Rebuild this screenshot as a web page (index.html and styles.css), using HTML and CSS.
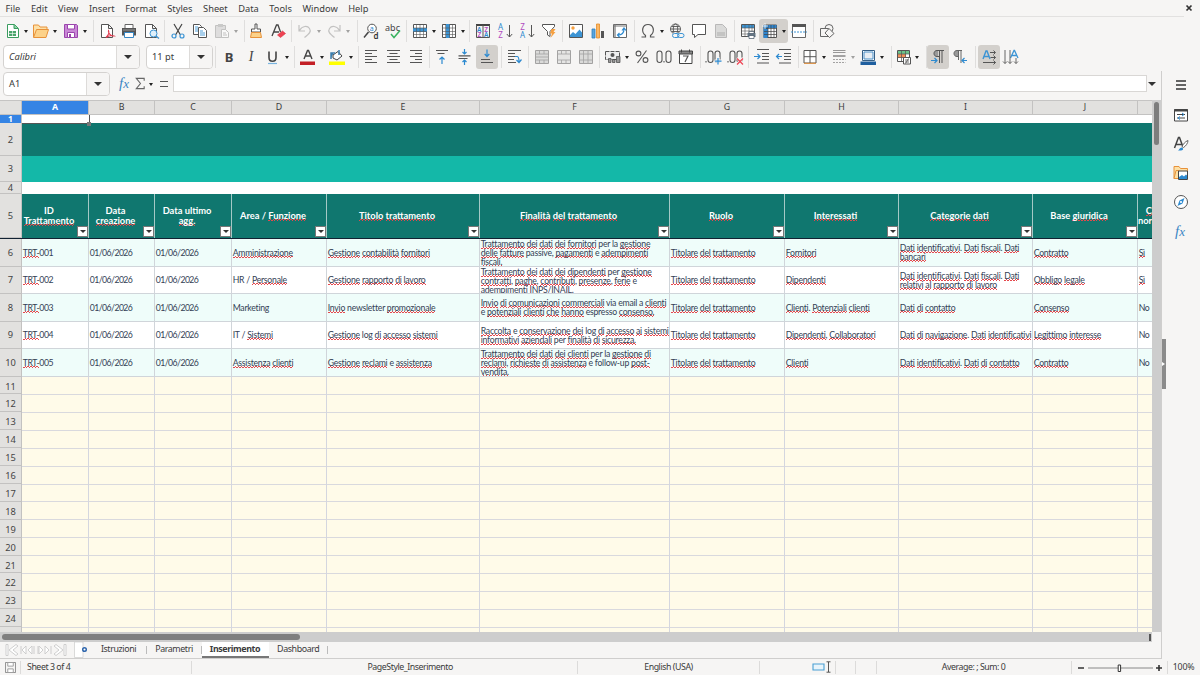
FILE: index.html
```html
<!DOCTYPE html>
<html lang="it">
<head>
<meta charset="utf-8">
<title>Registro trattamenti</title>
<link rel="stylesheet" href="styles.css">
</head>
<body>
<div class="app">
<nav class="menu"><span>File</span><span>Edit</span><span>View</span><span>Insert</span><span>Format</span><span>Styles</span><span>Sheet</span><span>Data</span><span>Tools</span><span>Window</span><span>Help</span>
<svg class="close" viewBox="0 0 8 8"><path d="M1.5 1.5l5 5M6.500 1.500l-5 5" stroke="#333" stroke-width="1.7"/></svg></nav>

<div class="bar bar1">
<div class="group first">
<svg viewBox="0 0 22 22"><path d="M6.500 4.500h7l4 4v9h-11z" fill="#fff" stroke="#3a9c5f"/><path d="M13 4.500v4h4" fill="#86d3a0" stroke="#3a9c5f"/><path d="M8 11h7v5H8z" fill="#4aa56b"/><path d="M8 13.500h7M11.500 11v5" stroke="#fff" stroke-width=".6"/></svg><i class="dd"></i>
<svg viewBox="0 0 22 22"><path d="M3.500 17V5h5l1.500 2h7v3" fill="#fde0a6" stroke="#e8923a"/><path d="M3.500 17.500l3-8h12l-2.500 8z" fill="#fcd28a" stroke="#e8923a"/></svg><i class="dd"></i>
<svg viewBox="0 0 22 22"><path d="M4.500 4.500h12l1 1v12h-13z" fill="#c987d6" stroke="#9b45ad"/><path d="M7.500 4.500h7v4.500h-7zM7.500 12.500h7v5h-7z" fill="#fff" stroke="#9b45ad"/><path d="M9 14h2v3H9z" fill="#9b45ad"/></svg><i class="dd"></i>
</div>
<div class="group">
<svg viewBox="0 0 22 22"><path d="M5.500 4.500h7l4 4v9h-11zM12.500 4.500v4h4" fill="#fff" stroke="#555"/><path d="M10 17.500c2-2 3.500-5 2.500-7-.8 2 2 6 5.500 5.500-2-.8-5-.4-8 1.500z" fill="none" stroke="#e03c50" stroke-width="1.100"/></svg>
<svg viewBox="0 0 22 22"><path d="M7 4.500h8v4H7z" fill="#fff" stroke="#666"/><path d="M4 8h14v7.500H4z" fill="#555"/><path d="M6.500 12.500h9v5h-9z" fill="#fff" stroke="#3686c4"/><path d="M5 10h12" stroke="#999"/></svg>
<svg viewBox="0 0 22 22"><path d="M5.500 4.500h7l4 4v9h-11zM12.500 4.500v4h4" fill="#fff" stroke="#555"/><circle cx="13.500" cy="13.500" r="3.500" fill="#dff0fb" stroke="#3c94d4"/><path d="M16 16l3 2.500" stroke="#3c94d4" stroke-width="1.400"/></svg>
</div>
<div class="group">
<svg viewBox="0 0 22 22"><path d="M7 4l6.500 11M15 4L8.500 15" stroke="#444" stroke-width="1.200"/><circle cx="7" cy="16" r="2" fill="none" stroke="#3c94d4" stroke-width="1.200"/><circle cx="15" cy="16" r="2" fill="none" stroke="#3c94d4" stroke-width="1.200"/></svg>
<svg viewBox="0 0 22 22"><path d="M4.500 4.500h6l2 2v8h-8z" fill="#fff" stroke="#555"/><path d="M9.500 7.500h5l3 3v7h-8z" fill="#fff" stroke="#555"/><path d="M11 11h3M11 13h5M11 15h5M6 7h3M6 9h3M6 11h3" stroke="#3c94d4" stroke-width=".9"/></svg>
<svg class="dim" viewBox="0 0 22 22"><path d="M4.500 5.500h10v12h-10z" fill="#bbb" stroke="#777"/><path d="M7 4h5v3H7z" fill="#888"/><path d="M10.500 9.500h4l3 3v5h-7z" fill="#fff" stroke="#777"/><path d="M12 13h3M12 15h4" stroke="#777"/></svg><i class="dd dim"></i>
</div>
<div class="group tight">
<svg viewBox="0 0 22 22"><path d="M10 4h2v5h3.500v3h-9V9H10z" fill="#fff" stroke="#555"/><path d="M6.500 12.500h9l1 5h-11z" fill="#fcd28a" stroke="#e8923a"/></svg>
<svg viewBox="0 0 22 22"><path d="M5 16L9.500 5h1.500l2.500 7M7 12h5" fill="none" stroke="#444" stroke-width="1.300"/><path d="M10.500 15l5-4 3 2.500-5 4z" fill="#ee4252" stroke="#d52f40" stroke-width=".6"/></svg>
</div>
<div class="group">
<svg class="dim" viewBox="0 0 22 22"><path d="M5 5v6h6M5.500 10.500c3-5 8-5 10-2s0 5-5 9" fill="none" stroke="#777" stroke-width="1.200"/></svg><i class="dd dim"></i>
<svg class="dim" viewBox="0 0 22 22"><path d="M17 5v6h-6M16.500 10.500c-3-5-8-5-10-2s0 5 5 9" fill="none" stroke="#777" stroke-width="1.200"/></svg><i class="dd dim"></i>
</div>
<div class="group">
<svg viewBox="0 0 22 22"><circle cx="12" cy="8.500" r="4.300" fill="#fff" stroke="#555"/><path d="M8.500 12L4 17.500" stroke="#444" stroke-width="1.500"/><text x="9.800" y="11.200" font-size="7" fill="#2d8ad0">a</text><text x="13.500" y="18.500" font-size="8" fill="#333" font-weight="600">d</text></svg>
<svg viewBox="0 0 22 22"><text x="3" y="10.500" font-size="9" textLength="15" fill="#444">abc</text><path d="M9 14l3 3.500 6-7" fill="none" stroke="#39b35f" stroke-width="1.500"/></svg>
</div>
<div class="group">
<svg viewBox="0 0 22 22"><path d="M4.500 4.500h13v13h-13z" fill="#fff" stroke="#555"/><path d="M4 8h14v4H4z" fill="#3c94d4"/><path d="M4 8h14M4 11.500h14M4 14.500h14M7.500 4v14M11 4v14M14.500 4v14" stroke="#555" stroke-width=".6"/></svg><i class="dd"></i>
<svg viewBox="0 0 22 22"><path d="M4.500 4.500h13v13h-13z" fill="#fff" stroke="#555"/><path d="M8 4h4v14H8z" fill="#3c94d4"/><path d="M4 8h14M4 11.500h14M4 14.500h14M7.500 4v14M11.500 4v14M14.500 4v14" stroke="#555" stroke-width=".6"/></svg><i class="dd"></i>
</div>
<div class="group">
<svg viewBox="0 0 22 22"><path d="M4 4h14v2H4z" fill="#444"/><path d="M4.500 5v12.500h13V5M11 5v12.500" fill="none" stroke="#555"/><g font-size="6.500" font-weight="600"><text x="5" y="11.500" fill="#2d8ad0">A</text><text x="5.400" y="17.200" fill="#b14bc0">Z</text><text x="12.200" y="11.500" fill="#b14bc0">Z</text><text x="12" y="17.200" fill="#2d8ad0">A</text></g></svg>
<svg viewBox="0 0 22 22"><text x="4" y="10" font-size="8" fill="#2d8ad0">A</text><text x="4.300" y="18" font-size="8" fill="#b14bc0">Z</text><path d="M15.500 5v12M12.800 14l2.700 3 2.700-3" fill="none" stroke="#555"/></svg>
<svg viewBox="0 0 22 22"><text x="4.300" y="10" font-size="8" fill="#b14bc0">Z</text><text x="4" y="18" font-size="8" fill="#2d8ad0">A</text><path d="M15.500 5v12M12.800 14l2.700 3 2.700-3" fill="none" stroke="#555"/></svg>
<svg viewBox="0 0 22 22"><path d="M4.500 4.500h12v2l-4.500 5v5l-2.500-1.500v-3.500l-5-5z" fill="#fff" stroke="#555"/><path d="M13.500 9h4l-2 3h2l-5 6 1.500-4.500h-2z" fill="#f6a040"/></svg>
</div>
<div class="group">
<svg viewBox="0 0 22 22"><path d="M4.500 4.500h13v13h-13z" fill="#fff" stroke="#555"/><circle cx="8" cy="8" r="1.700" fill="#f6a040"/><path d="M5 17v-2l3-3 2.500 2 4-4.500 2.500 3V17z" fill="#3c94d4"/></svg>
<svg viewBox="0 0 22 22"><path d="M5 9h3v9H5z" fill="#5aa5dc" stroke="#2f7fbf" stroke-width=".8"/><path d="M9.500 4h3v14h-3z" fill="#fbb766" stroke="#e58c26" stroke-width=".8"/><path d="M14 11h3v7h-3z" fill="#555"/></svg>
<svg viewBox="0 0 22 22"><path d="M4.500 4.500h13v13h-13z" fill="#fff" stroke="#666"/><path d="M4 6h14M6 4v14" stroke="#777" stroke-width="1.200"/><path d="M9 15c4 0 6-2 6-6M13 10.500l2-2.500 2 2.500M10.500 13l-2 2 2 2" fill="none" stroke="#2d8ad0" stroke-width="1.200"/></svg>
</div>
<div class="group">
<svg viewBox="0 0 22 22"><path d="M4.500 17h4v-1.500c-5-4-3-11 2.500-11s7.500 7 2.500 11V17h4" fill="none" stroke="#555" stroke-width="1.200"/></svg><i class="dd"></i>
<svg viewBox="0 0 22 22"><g fill="none" stroke="#555" stroke-width=".9"><circle cx="9.500" cy="9" r="5"/><ellipse cx="9.500" cy="9" rx="2.200" ry="5"/><path d="M4.500 9h10M5.500 6.500h8M5.500 11.500h8"/></g><path d="M7 13h12v5H7z" fill="#f6f5f4"/><rect x="6.500" y="13.500" width="6.500" height="4" rx="2" fill="none" stroke="#3c94d4"/><rect x="11.500" y="13.500" width="6.500" height="4" rx="2" fill="none" stroke="#3c94d4"/></svg>
<svg viewBox="0 0 22 22"><path d="M4.500 4.500h13v10H10l-3.500 3v-3h-2z" fill="#fff" stroke="#555"/></svg>
<svg class="mid" viewBox="0 0 22 22"><path d="M5.500 4.500h7l4 4v9h-11z" fill="#ccc" stroke="#999"/><path d="M7 13h8M7 15h8" stroke="#888"/></svg>
</div>
<div class="group">
<svg viewBox="0 0 22 22"><path d="M4.500 4.500h13v12h-13z" fill="#fff" stroke="#555"/><path d="M5 5h12v3H5z" fill="#3c94d4"/><path d="M4 8h14M4 11h14M4 14h14M8 4v13M12 4v13M15 4v13" stroke="#555" stroke-width=".6"/><path d="M10.500 13h8v4h-8z" fill="#667785"/><path d="M12 11.500h5v2h-5zM12 15.500h5v3h-5z" fill="#fff" stroke="#456" stroke-width=".7"/></svg>
<span class="on wide"><svg viewBox="0 0 22 22"><path d="M5 5h12.500v12.500H5z" fill="#fff" stroke="#555"/><path d="M5 5h12.500v3H5zM4.500 5h4.500v13H4.500z" fill="#2f86cf"/><path d="M5 8.500h12.500M5 11.500h12.500M5 14.500h12.500M9 5v13M12 5v13M15 5v13" stroke="#444" stroke-width=".7"/><path d="M6 3v6M3 6h6" stroke="#fff" stroke-width=".8"/></svg><i class="dd"></i></span>
<svg viewBox="0 0 22 22"><path d="M4.500 5.500h13v12h-13z" fill="#fff" stroke="#666"/><path d="M4 4h14v3H4z" fill="#555"/><path d="M3 12h16" stroke="#3c94d4" stroke-dasharray="2 1"/></svg>
</div>
<div class="group">
<svg viewBox="0 0 22 22"><g fill="#f6f5f4" stroke="#666"><circle cx="13" cy="8.500" r="4"/><path d="M4.500 8.500h8v8h-8z"/><path d="M13 8.500l5 5-4.500 4-4.500-4.500z"/></g></svg>
</div>
</div>

<div class="bar bar2">
<div class="fields"><div class="combo font"><em>Calibri</em><b></b></div><div class="combo size"><span>11 pt</span><b></b></div></div>
<div class="group">
<span class="glyph bold">B</span><span class="glyph ital">I</span>
<svg viewBox="0 0 22 22"><path d="M7 5.500v6c0 5 7 5 7 0v-6" fill="none" stroke="#444" stroke-width="1.600"/><path d="M6 17.500h9" stroke="#79b4e0" stroke-width="1.200"/></svg><i class="dd"></i>
</div>
<div class="group">
<svg viewBox="0 0 22 22"><path d="M7 13l3.500-8.500h1L15 13M8.500 10h5" fill="none" stroke="#444" stroke-width="1.400"/><path d="M3 15.500h15v3.500H3z" fill="#c32026"/></svg><i class="dd"></i>
<svg viewBox="0 0 22 22"><path d="M7 9l5-3.500 4 4.500-5 4-4-2z" fill="#fff" stroke="#444"/><path d="M13 4v5M7 8c-2 0-2 3-2 5V7h4" fill="none" stroke="#3d7fae" stroke-width="1.500"/><path d="M3 15.500h16v3.500H3z" fill="#ffff00"/></svg><i class="dd"></i>
</div>
<div class="group">
<svg viewBox="0 0 22 22"><path d="M4 4.500h12M4 7.500h7M4 10.500h12M4 13.500h7M4 16.500h12" stroke="#555" stroke-width="1.200"/></svg>
<svg viewBox="0 0 22 22"><path d="M4 4.500h13M6.500 7.500h8M4 10.500h13M6.500 13.500h8M4 16.500h13" stroke="#555" stroke-width="1.200"/></svg>
<svg viewBox="0 0 22 22"><path d="M5 4.500h12M10 7.500h7M5 10.500h12M10 13.500h7M5 16.500h12" stroke="#555" stroke-width="1.200"/></svg>
</div>
<div class="group">
<svg viewBox="0 0 22 22"><path d="M4 4.500h12M5.500 7.500h7" stroke="#555" stroke-width="1.200"/><path d="M10 18v-6.500M7.500 13.500l2.500-2.500 2.500 2.500" fill="none" stroke="#2d8ad0" stroke-width="1.200"/></svg>
<svg viewBox="0 0 22 22"><path d="M4.500 9.800h12M4.500 12.500h9" stroke="#555" stroke-width="1.200"/><path d="M10.500 3v5M8.500 6l2 2 2-2M10.500 19v-5M8.500 16l2-2 2 2" fill="none" stroke="#2d8ad0" stroke-width="1.200"/></svg>
<span class="on"><svg viewBox="0 0 22 22"><path d="M5 13.500h9M5 16.500h12" stroke="#555" stroke-width="1.200"/><path d="M11 3.500v7M8.700 8l2.300 2.500L13.300 8" fill="none" stroke="#2d8ad0" stroke-width="1.200"/></svg></span>
</div>
<div class="group">
<svg viewBox="0 0 22 22"><path d="M4 4.500h13M4 7.500h7M4 10.500h8M4 13.500h6M4 16.500h8" stroke="#555" stroke-width="1.200"/><path d="M11 10.500h2c2 0 2 2 2 5M12.500 14l2.500 2.500 2.500-3" fill="none" stroke="#2d8ad0" stroke-width="1.200"/></svg>
</div>
<div class="group">
<svg class="mid" viewBox="0 0 22 22"><path d="M4.500 4.500h13v13h-13z" fill="#ccc" stroke="#777"/><path d="M4 8h14M4 14h14M8.500 4v4M13 4v4M8.500 14v4M13 14v4M4 11h14" stroke="#777" stroke-width=".8"/></svg>
<svg class="mid" viewBox="0 0 22 22"><path d="M4.500 4.500h13v13h-13z" fill="#ddd" stroke="#777"/><path d="M4 8h14M4 14h14M8.500 4v4M13 4v4M8.500 14v4M13 14v4" stroke="#777" stroke-width=".8"/></svg>
<svg class="mid" viewBox="0 0 22 22"><path d="M4.500 4.500h13v13h-13z" fill="#ccc" stroke="#777"/><path d="M4 8h14M4 14h14M8.500 4v14M13 4v14" stroke="#777" stroke-width=".8"/></svg>
</div>
<div class="group">
<svg viewBox="0 0 22 22"><path d="M3.500 5.500h14v8h-14z" fill="#eee" stroke="#555" stroke-dasharray="4 1"/><circle cx="10.500" cy="9" r="2" fill="#555"/><path d="M6.500 12.500h2.500v4H6.500zM10.500 13.500h2.500v3h-2.500zM14.500 10.500h3.500v6h-3.500z" fill="#999" stroke="#444" stroke-width=".7"/></svg><i class="dd"></i>
<svg viewBox="0 0 22 22"><g fill="none" stroke="#555" stroke-width="1.100"><circle cx="7.500" cy="7.500" r="2.400"/><circle cx="14.500" cy="14" r="2.400"/><path d="M15.500 4.500L6.500 17"/></g></svg>
<svg viewBox="0 0 22 22"><g fill="none" stroke="#555" stroke-width="1.100"><rect x="4" y="5" width="5" height="11.500" rx="2.500"/><rect x="13" y="5" width="5" height="11.500" rx="2.500"/><path d="M11 15v1.500"/></g></svg>
<svg viewBox="0 0 22 22"><path d="M4.500 5.500h12.500v12H4.500z" fill="#fff" stroke="#444"/><path d="M4 5h13.500v3H4zM6.500 3.500v3M14.500 3.500v3" stroke="#444" fill="#888"/><path d="M8 10h5l-3 6" fill="none" stroke="#555" stroke-width="1.200"/></svg>
</div>
<div class="group">
<svg viewBox="0 0 22 22"><g fill="none" stroke="#555" stroke-width="1.100"><rect x="5" y="5" width="5" height="11.500" rx="2.500"/><rect x="12" y="5" width="5" height="11.500" rx="2.500"/><path d="M3 15v1.500"/></g><path d="M15 11v8M11.500 15h7" stroke="#f6f5f4" stroke-width="3"/><path d="M15 12v6.500M12 15.200h6.500" stroke="#2d8ad0" stroke-width="1.200"/></svg>
<svg viewBox="0 0 22 22"><g fill="none" stroke="#555" stroke-width="1.100"><rect x="5" y="5" width="5" height="11.500" rx="2.500"/><rect x="12" y="5" width="5" height="11.500" rx="2.500"/><path d="M3 15v1.500"/></g><path d="M12 12l6 6M18 12l-6 6" stroke="#f6f5f4" stroke-width="2.600"/><path d="M12 12.500l6 6M18 12.500l-6 6" stroke="#ee4252" stroke-width="1.200"/></svg>
</div>
<div class="group">
<svg viewBox="0 0 22 22"><path d="M6 3.500h12M11 7.500h7M11 10.500h7M11 13.500h7M6 17h12" stroke="#555" stroke-width="1.200"/><path d="M3 10.500h6M6.500 8L9 10.500 6.500 13" fill="none" stroke="#2d8ad0" stroke-width="1.200"/></svg>
<svg viewBox="0 0 22 22"><path d="M6 3.500h12M11 7.500h7M11 10.500h7M11 13.500h7M6 17h12" stroke="#555" stroke-width="1.200"/><path d="M3.500 10.500H9M6 8l-2.500 2.500L6 13" fill="none" stroke="#2d8ad0" stroke-width="1.200"/></svg>
</div>
<div class="group tight">
<svg viewBox="0 0 22 22"><path d="M5 4.500h12v12.500H5zM11 4.500V17M5 10.700h12" fill="#fff" stroke="#555"/><path d="M5 17.300h12" stroke="#e8923a"/></svg><i class="dd"></i>
<svg class="mid" viewBox="0 0 22 22"><path d="M5 4.500h12.500M5 6.500h12.500" stroke="#666"/><path d="M5 10h12.500" stroke="#777" stroke-width="2"/><path d="M5 13.500h12.500M5 16.500h12.500" stroke="#777" stroke-dasharray="2 1"/></svg><i class="dd dim"></i>
<svg viewBox="0 0 22 22"><path d="M5.500 4.500h12v10h-12z" fill="#fff" stroke="#355f86"/><path d="M7 6h9v7H7z" fill="#e8eef4" stroke="#4a90c8"/><path d="M3.500 15.500h15.500v3.500H3.500z" fill="#1f5f9f"/></svg><i class="dd"></i>
</div>
<div class="group tight">
<svg viewBox="0 0 22 22"><path d="M5.500 4.500h12v11h-12z" fill="#fff" stroke="#555"/><path d="M6 5h11v3H6z" fill="#6cc58b"/><path d="M6 8h8v4H6z" fill="#f0905a"/><path d="M5 8h13M5 11.500h13M9.500 5v11M13.500 5v11" stroke="#555" stroke-width=".7"/><path d="M11.500 11.500h7v6.500h-7z" fill="#fff" stroke="#555"/><path d="M13 14h4M13 16h4M16.500 12.500l-3 5" stroke="#555" stroke-width=".8"/></svg><i class="dd"></i>
</div>
<div class="group tight">
<span class="on"><svg viewBox="0 0 22 22"><path d="M11 4.500H9.500c-3.500 0-3.500 6 0 6H11z" fill="#999"/><path d="M17 4.500H10c-4 0-4 6 0 6h2M12.500 4.500v12.500M15 4.500v12.500" fill="none" stroke="#555"/><path d="M4 14.500h6M7.500 12l2.500 2.500L7.500 17" fill="none" stroke="#2d8ad0" stroke-width="1.200"/></svg></span>
<svg viewBox="0 0 22 22"><path d="M9 4.500H7.500c-3.500 0-3.500 6 0 6H9z" fill="#999"/><path d="M13 4.500H8c-4 0-4 6 0 6h1M9.500 4.500V14M12 4.500V17" fill="none" stroke="#666"/><path d="M18 14.500h-5M15.500 12L13 14.500l2.500 2.500" fill="none" stroke="#2d8ad0" stroke-width="1.200"/></svg>
</div>
<div class="group">
<span class="on"><svg viewBox="0 0 22 22"><path d="M5 13l3-8h1l3 8M6 10.500h5" fill="none" stroke="#3c94d4" stroke-width="1.400"/><path d="M12 6.500h5M15.500 4.500l2 2-2 2M12.500 11.500h5M15.500 9.500l2 2-2 2M5 16.500h12.500M15.500 14.500l2 2-2 2" fill="none" stroke="#555"/></svg></span>
<svg viewBox="0 0 22 22"><path d="M10.500 12L14 4.500h.5L18 12M12 9.500h5" fill="none" stroke="#3c94d4" stroke-width="1.300"/><path d="M5 4v13.500M3 15.500l2 2 2-2M10 4v13.500M8 15.500l2 2 2-2M16 12v5.500M14 15.500l2 2 2-2" fill="none" stroke="#666"/></svg>
</div>
</div>

<div class="formula">
<div class="combo name"><span>A1</span><b></b></div>
<span class="fx">f<small>x</small></span>
<svg class="sigma" viewBox="0 0 12 14"><path d="M10.500 4V1.500H2L6.500 7 2 12.500h8.500V10" fill="none" stroke="#666" stroke-width="1.200"/></svg><i class="dd"></i><span class="eq"></span>
<div class="input"></div><b class="expand"></b>
</div>

<div class="work">
<div class="main">
<div class="sheet">
<div class="row colhead"><span class="rh"></span><span class="sel">A</span><span>B</span><span>C</span><span>D</span><span>E</span><span>F</span><span>G</span><span>H</span><span>I</span><span>J</span><span></span></div>
<div class="row r1"><span class="rh sel">1</span><span class="band cursor"></span></div>
<div class="row r2"><span class="rh">2</span><span class="band dark"></span></div>
<div class="row r3"><span class="rh">3</span><span class="band teal"></span></div>
<div class="row r4"><span class="rh">4</span><span class="band"></span></div>
<div class="row r5"><span class="rh">5</span>
<div class="h"><p>ID<br><u>Trattamento</u></p><s></s></div><div class="h"><p>Data<br><u>creazione</u></p><s></s></div><div class="h"><p>Data ultimo<br><u>agg.</u></p><s></s></div><div class="h"><p>Area / <u>Funzione</u></p><s></s></div><div class="h"><p><u>Titolo</u> <u>trattamento</u></p><s></s></div><div class="h"><p><u>Finalità</u> <u>del</u> <u>trattamento</u></p><s></s></div><div class="h"><p><u>Ruolo</u></p><s></s></div><div class="h"><p><u>Interessati</u></p><s></s></div><div class="h"><p><u>Categorie</u> <u>dati</u></p><s></s></div><div class="h"><p>Base <u>giuridica</u></p><s></s></div><div class="h last"><p><u>C</u><br>nor</p></div></div>
<div class="row data mint"><span class="rh">6</span><div><u>TRT-</u>001</div><div class="date">01/06/2026</div><div class="date">01/06/2026</div><div><u>Amministrazione</u></div><div><u>Gestione</u> <u>contabilità</u> <u>fornitori</u></div><div><u>Trattamento</u> <u>dei</u> <u>dati</u> <u>dei</u> <u>fornitori</u> per la <u>gestione</u><br><u>delle</u> <u>fatture</u> passive, <u>pagamenti</u> e <u>adempimenti</u><br><u>fiscali.</u></div><div><u>Titolare</u> <u>del</u> <u>trattamento</u></div><div><u>Fornitori</u></div><div><u>Dati</u> <u>identificativi</u>. <u>Dati</u> <u>fiscali</u>. <u>Dati</u><br><u>bancari</u></div><div><u>Contratto</u></div><div><u>Sì</u></div></div>
<div class="row data"><span class="rh">7</span><div><u>TRT-</u>002</div><div class="date">01/06/2026</div><div class="date">01/06/2026</div><div>HR / <u>Personale</u></div><div><u>Gestione</u> <u>rapporto</u> <u>di</u> <u>lavoro</u></div><div><u>Trattamento</u> <u>dei</u> <u>dati</u> <u>dei</u> <u>dipendenti</u> per <u>gestione</u><br><u>contratti</u>, <u>paghe</u>, <u>contributi</u>, <u>presenze</u>, <u>ferie</u> e<br><u>adempimenti</u> <u>INPS/INAIL.</u></div><div><u>Titolare</u> <u>del</u> <u>trattamento</u></div><div><u>Dipendenti</u></div><div><u>Dati</u> <u>identificativi</u>. <u>Dati</u> <u>fiscali</u>. <u>Dati</u><br><u>relativi</u> <u>al</u> <u>rapporto</u> <u>di</u> <u>lavoro</u></div><div><u>Obbligo</u> <u>legale</u></div><div><u>Sì</u></div></div>
<div class="row data mint"><span class="rh">8</span><div><u>TRT-</u>003</div><div class="date">01/06/2026</div><div class="date">01/06/2026</div><div>Marketing</div><div><u>Invio</u> newsletter <u>promozionale</u></div><div><u>Invio</u> <u>di</u> <u>comunicazioni</u> <u>commerciali</u> via email a <u>clienti</u><br>e <u>potenziali</u> <u>clienti</u> <u>che</u> <u>hanno</u> espresso <u>consenso.</u></div><div><u>Titolare</u> <u>del</u> <u>trattamento</u></div><div><u>Clienti</u>. <u>Potenziali</u> <u>clienti</u></div><div><u>Dati</u> <u>di</u> <u>contatto</u></div><div><u>Consenso</u></div><div>No</div></div>
<div class="row data"><span class="rh">9</span><div><u>TRT-</u>004</div><div class="date">01/06/2026</div><div class="date">01/06/2026</div><div>IT / <u>Sistemi</u></div><div><u>Gestione</u> log <u>di</u> <u>accesso</u> <u>sistemi</u></div><div><u>Raccolta</u> e <u>conservazione</u> <u>dei</u> log <u>di</u> <u>accesso</u> <u>ai</u> <u>sistemi</u><br><u>informativi</u> <u>aziendali</u> per <u>finalità</u> <u>di</u> <u>sicurezza.</u></div><div><u>Titolare</u> <u>del</u> <u>trattamento</u></div><div><u>Dipendenti</u>, <u>Collaboratori</u></div><div><u>Dati</u> <u>di</u> <u>navigazione</u>. <u>Dati</u> <u>identificativi</u></div><div><u>Legittimo</u> <u>interesse</u></div><div>No</div></div>
<div class="row data mint"><span class="rh">10</span><div><u>TRT-</u>005</div><div class="date">01/06/2026</div><div class="date">01/06/2026</div><div><u>Assistenza</u> <u>clienti</u></div><div><u>Gestione</u> <u>reclami</u> e <u>assistenza</u></div><div><u>Trattamento</u> <u>dei</u> <u>dati</u> <u>dei</u> <u>clienti</u> per la <u>gestione</u> <u>di</u><br><u>reclami</u>, <u>richieste</u> <u>di</u> <u>assistenza</u> e follow-up <u>post-</u><br><u>vendita.</u></div><div><u>Titolare</u> <u>del</u> <u>trattamento</u></div><div><u>Clienti</u></div><div><u>Dati</u> <u>identificativi</u>. <u>Dati</u> <u>di</u> <u>contatto</u></div><div><u>Contratto</u></div><div>No</div></div>
<div class="blank"><div class="nums"><span>11</span><span>12</span><span>13</span><span>14</span><span>15</span><span>16</span><span>17</span><span>18</span><span>19</span><span>20</span><span>21</span><span>22</span><span>23</span><span>24</span><span></span></div><div class="lines"><i></i><i></i><i></i><i></i><i></i><i></i><i></i><i></i><i></i><i></i><i></i></div></div>
</div>
<div class="vscroll"><i></i></div>
<div class="hscroll"><i></i><b></b></div>
<div class="tabs">
<svg class="navs" viewBox="0 0 62 14"><g fill="#fff" stroke="#c9c9c9" stroke-width=".9"><path d="M1 1.500h2v11H1zM11 1.500L4 7l7 5.500L13 11 8 7l5-4z"/><path d="M16 3v8M21 3l-4 4 4 4zM27 3l-4 4 4 4zM29 3v8M33 3v8M34 3l4 4-4 4zM40 3l4 4-4 4zM46 3v8"/><path d="M59 1.500h2v11h-2zM51 1.500L58 7l-7 5.500L49 11l5-4-5-4z"/></g></svg>
<svg class="addtab" viewBox="0 0 14 16"><path d="M1.500 0H10v15.500H1.500z" fill="#fff" stroke="#ccc" stroke-width=".7"/><circle cx="11.500" cy="7.500" r="1.800" fill="#fff" stroke="#2f66ad" stroke-width="1.500"/></svg>
<span class="t1">Istruzioni</span><span class="t2">Parametri</span><span class="t3">Inserimento</span><span class="t4">Dashboard</span>
</div>
</div>
<aside class="side">
<svg viewBox="0 0 16 16"><path d="M3 4h10M3 8h10M3 12h10" stroke="#333" stroke-width="1.500"/></svg>
<svg viewBox="0 0 16 16"><path d="M1.500 2.500h13v11.500h-13z" fill="#fff" stroke="#444"/><path d="M1.500 2h13v2.500h-13z" fill="#444"/><path d="M4 7.500h8M4 11h8" stroke="#444"/><path d="M9 6l2 1.500L9 9M7 9.500L5 11l2 1.500" fill="none" stroke="#2d8ad0"/></svg>
<svg viewBox="0 0 16 16"><path d="M1.500 12L5.500 1.500h1L10 11M3 8.500h6" fill="none" stroke="#444" stroke-width="1.500"/><path d="M15 4.500c-3 1-5 4-6 6l1.500 1C13 10 15 7 15 4.500z" fill="#fff" stroke="#555" stroke-width=".9"/><path d="M5 14.500c1.500-.5 1.500-3 3.500-3s2.500 3-.5 3z" fill="#2d8ad0"/></svg>
<svg viewBox="0 0 16 16"><path d="M1 13.500v-12h5l1.500 2h7V6" fill="#fde0a6" stroke="#e8923a"/><path d="M1 13.500l2-8h3v8z" fill="#fde0a6" stroke="#e8923a"/><path d="M5.500 6h9v8.500h-9z" fill="#fff" stroke="#444"/><path d="M6 14v-2l3-2 2 1.500 2-2 1 1V14z" fill="#2d8ad0"/></svg>
<svg viewBox="0 0 16 16"><circle cx="8" cy="8" r="6.500" fill="#fff" stroke="#555"/><path d="M11.500 4L9.500 9.500 4.500 12l2-5.500z" fill="#2d8ad0"/><circle cx="8" cy="8" r="1.100" fill="#fff"/></svg>
<span class="fx">f<small>x</small></span>
<b class="handle"></b>
</aside>
</div>

<footer class="status">
<span class="disk"><svg viewBox="0 0 12 12"><path d="M.5.500h11v11H.500z" fill="#f6f5f4" stroke="#888"/><path d="M3 .5h6v4H3zM3 7.500h6v4H3z" fill="#fff" stroke="#999"/></svg></span>
<span class="s1">Sheet 3 of 4</span><span class="s2">PageStyle_Inserimento</span><span class="s3">English (USA)</span>
<span class="s4"><svg viewBox="0 0 22 12"><path d="M1 3h11v6H1z" fill="#e8f4fb" stroke="#4a9fd4" stroke-width="1.100"/><path d="M14.500.800h4M14.500 11.200h4M16.500 1v10" stroke="#444" stroke-width=".9"/></svg></span><span class="s5"></span><span class="s6"></span>
<span class="s7">Average: ; Sum: 0</span>
<span class="s8"><svg viewBox="0 0 86 12"><path d="M1 6h6M79 6h6M82 3v6" stroke="#333" stroke-width="1.600"/><path d="M11 6h65" stroke="#888"/><path d="M41.200 3h2.400v6.500h-2.400z" fill="#fff" stroke="#333"/></svg></span>
<span class="s9">100%</span>
</footer>
</div>
</body>
</html>
```
FILE: styles.css
```css
* { box-sizing: border-box; }
body { margin: 0; background: #f6f5f4; color: #3b3b3b; font-family: "Noto Sans", sans-serif; font-size: 9.3px; overflow: hidden; }
p { margin: 0; }
.app { width: 1200px; height: 675px; display: grid; grid-template-rows: 17px 27px 26px 30px 559px 16px; overflow: hidden; }

.menu { display: flex; gap: 10.500px; padding-left: 5.500px; line-height: 17px; position: relative; }
.menu::after { content: ""; position: absolute; left: 0; bottom: 0; width: 1184px; height: 1px; background: #e2e1e0; }
.close { width: 8px; height: 8px; margin: 4px 7px 0 auto; }

.bar { display: grid; align-items: center; }
.bar1 { grid-template-columns: 93px 71px 80px 47px 65.500px 49px 63.500px 93px 71.500px 100px 79px 40px; }
.bar2 { grid-template-columns: 215px 79px 63.500px 71.500px 71.500px 27px 71px 101px 48.500px 49.500px 93.500px 35px 48.500px 60px; }
.group { display: flex; align-items: center; height: 22px; padding-left: 2px; border-left: 1px solid #dfdedd; }
.group.first { border-color: transparent; padding-left: 0; }
.group.tight { padding-left: 0; }
.group svg { width: 22px; height: 22px; flex: none; display: block; }
.dd { width: 7.400px; flex: none; position: relative; height: 8px; }
.dd::before { content: ""; position: absolute; left: 1px; top: 3px; border: 2.500px solid transparent; border-top: 3px solid #222; border-bottom: 0; }
.dim { opacity: .4; }
.mid { opacity: .65; }
.on { background: #d3d0cc; border-radius: 3px; height: 24px; width: 22px; display: flex; align-items: center; flex: none; }
.on.wide { width: 29px; }
.glyph { width: 22px; text-align: center; font-size: 13px; line-height: 22px; color: #444; }
.bold { font-weight: 700; }
.ital { font-family: "Liberation Serif", serif; font-style: italic; font-size: 14px; }

.fields { display: flex; gap: 6px; padding-left: 3px; }
.combo { height: 24px; border: 1px solid #d4d2d0; border-radius: 4px; background: #fff; display: flex; justify-content: space-between; line-height: 21px; padding-left: 5px; overflow: hidden; }
.combo > b { width: 23px; background: #f6f5f4; border-left: 1px solid #dddbd9; display: flex; align-items: center; justify-content: center; }
.combo > b::before, .expand { content: ""; border: 4px solid transparent; border-top: 4.500px solid #333; border-bottom: 0; }
.combo.font { width: 137px; }
.combo.size { width: 67px; }
.combo.name { width: 107px; }

.formula { display: flex; align-items: center; padding: 0 0 3px 3px; }
.fx { font-family: "Liberation Serif", serif; font-style: italic; font-size: 15px; line-height: 16px; color: #3c86c4; white-space: nowrap; }
.fx small { font-size: 13px; }
.formula .fx { margin-left: 9px; width: 15px; }
.sigma { width: 12px; height: 13px; }
.formula .dd { margin-left: 2px; width: 9px; }
.eq { width: 8px; height: 6px; border: solid #555; border-width: 1.500px 0; margin: 0 4px 0 3px; }
.input { width: 973.500px; height: 17px; background: #fff; border: 1px solid #d9d7d5; margin-left: auto; }
.expand { margin: 0 44px 0 1.500px; flex: none; }

.work { display: grid; grid-template-columns: 1161px 39px; }
.main { display: grid; grid-template: 532px 10px 17px / 1152px 9px; }
.sheet { overflow: hidden; border-top: 1px solid #c5c4c3; }
.row { display: grid; grid-template-columns: 22px 67px 66px 77px 95px 153px 190px 115px 114px 134px 105px 14px; background: #fff; }
.rh { background: #e2e1df; border: solid #c3c2c1; border-width: 0 1px 1px 0; display: flex; align-items: center; justify-content: center; font-size: 9.300px; color: #444; overflow: hidden; }
.colhead { height: 13.500px; background: #e2e1df; text-align: center; line-height: 13px; font-size: 8.800px; }
.colhead > span { border-right: 1px solid #c3c2c1; border-bottom: 1px solid #c3c2c1; }
.colhead > span:last-child { border-right: 0; }
.row .sel { background: #3584e4; color: #fff; font-weight: 700; }
.row .rh.sel { font-size: 8.500px; line-height: 8px; overflow: visible; border-bottom: 0; }
.band { grid-column: 2 / -1; }
.dark { background: #10776f; }
.teal { background: #14b8a8; }
.r1 { height: 8.500px; }
.r2 { height: 33px; }
.r3 { height: 26px; }
.r4 { height: 12px; }
.r5 { height: 45px; border-bottom: 1.500px solid #123; }
.cursor { position: relative; }
.cursor::before { content: ""; position: absolute; left: 0; top: 0; width: 67px; height: 8.500px; border: solid #555; border-width: 0 1px 1px 0; }
.cursor::after { content: ""; position: absolute; left: 64.500px; top: 7px; width: 4px; height: 4px; background: #777; z-index: 2; }
.h { background: #10776f; color: #fff; font: 700 9.300px/10.400px Lato, sans-serif; border-right: 1px solid #a5c9c6; display: flex; align-items: center; justify-content: center; text-align: center; position: relative; white-space: nowrap; padding-right: 12px; }
.h.last { padding: 0; border: 0; justify-content: flex-end; overflow: hidden; text-align: right; }
.h s { position: absolute; right: 0; bottom: 1px; width: 11px; height: 11px; background: #fff; border: 1px solid #777; }
.h s::before { content: ""; position: absolute; left: 1.500px; top: 3px; border: 3px solid transparent; border-top: 3.500px solid #333; border-bottom: 0; }
/* Spell-check squiggle: two offset dashed rows under the baseline. */
u {
  text-decoration: none;
  background:
    repeating-linear-gradient(90deg, #e5484d 0 1.500px, transparent 1.500px 3px) 0 100% / 100% 1px no-repeat,
    repeating-linear-gradient(90deg, transparent 0 1.500px, #e5484d 1.500px 3px) 0 calc(100% - 1px) / 100% 1px no-repeat;
}
.data { height: 27.500px; font: 8.700px/9px Lato, sans-serif; color: #334155; }
.data > div { border: solid #d0d5da; border-width: 0 1px 1px 0; padding-left: .7px; display: block; align-content: center; white-space: nowrap; letter-spacing: -.25px; overflow: hidden; }
.data > .date { letter-spacing: -.550px; }
.data > div:nth-child(2) { letter-spacing: -.400px; }
.data > div:last-child { letter-spacing: -.400px; }
.data > .rh { font-family: "Noto Sans", sans-serif; }
.mint > div { background: #effdfa; }
.blank { display: grid; grid-template-columns: 22px 1130px; }
.nums { display: grid; grid-template-rows: repeat(15, 17.920px); }
.nums span { background: #e2e1df; border: solid #c3c2c1; border-width: 0 1px 1px 0; text-align: center; line-height: 19px; color: #444; }
.lines { display: grid; grid-template-columns: 67px 66px 77px 95px 153px 190px 115px 114px 134px 105px 14px; background: repeating-linear-gradient(to bottom, transparent 0 16.920px, #d9d9de 16.920px 17.920px), #fffbe9; }
.lines i { border-right: 1px solid #d4d6df; }
.lines i:last-child, .data > div:last-child { border-right: 0; }
.vscroll { background: #cdcdcd; padding: 2px 2px; }
.vscroll i { display: block; width: 5px; height: 43px; border-radius: 3px; background: #7d7d7d; }
.hscroll { grid-column: 1; background: #cdcdcd; display: flex; align-items: center; justify-content: space-between; padding: 0 1px 0 2px; }
.hscroll i { width: 298px; height: 6px; border-radius: 3px; background: #7f7f7f; }
.hscroll b { width: 2px; height: 7px; background: #555; }
.tabs { grid-column: 1 / -1; display: flex; border-bottom: 1px solid #cfcecd; line-height: 14px; font-size: 8.900px; letter-spacing: -.400px; }
.navs { width: 62px; height: 14px; margin: 1px 0 0 5px; }
.addtab { width: 14px; height: 16px; margin-left: 6px; }
.tabs span { text-align: center; height: 15.500px; }
.t1 { width: 56px; margin-left: 3.500px; }
.t2 { width: 55px; }
.t1, .t2 { background: linear-gradient(#bbb, #bbb) right 4px / 1px 8px no-repeat; }
.t3 { width: 67px; background: #fff; border-bottom: 2px solid #777; font-weight: 700; }
.t4 { width: 59.500px; background: linear-gradient(#bbb, #bbb) right 4px / 1px 8px no-repeat; }

.side { border-left: 1px solid #cfcecd; margin-top: -29px; padding: 6px 11px 0; display: flex; flex-direction: column; gap: 13.100px; position: relative; }
.side svg { width: 16px; height: 16px; flex: none; }
.side svg:first-child { margin-bottom: 1px; }
.side .fx { padding-left: 2px; }
.handle { position: absolute; left: 0; top: 268px; width: 4px; height: 50px; background: #8b8b8b; }
.handle::before { content: ""; position: absolute; left: 0; top: 23px; border: 2.500px solid transparent; border-left: 3px solid #fff; border-right: 0; }

.status { display: flex; align-items: center; font-size: 8.800px; letter-spacing: -.450px; }
.status span { border-right: 1px solid #dcdbda; height: 13px; flex: none; text-align: center; line-height: 13px; }
.disk { width: 21px; padding-top: 1px; }
.disk svg { width: 11px; height: 11px; }
.status .s1 { width: 170.500px; text-align: left; padding-left: 6px; }
.status .s2 { width: 386.500px; text-align: left; padding-left: 176px; }
.status .s3 { width: 182px; }
.s4 { width: 76px; padding-left: 52px; }
.s4 svg { width: 22px; height: 12px; display: block; }
.s5, .s6 { width: 20.300px; }
.s7 { width: 195px; }
.s8 { width: 96px; padding: 1px 0 0 5px; }
.s8 svg { width: 86px; height: 12px; display: block; }
.status .s9 { border: 0; width: 32px; letter-spacing: -.200px; }
```
